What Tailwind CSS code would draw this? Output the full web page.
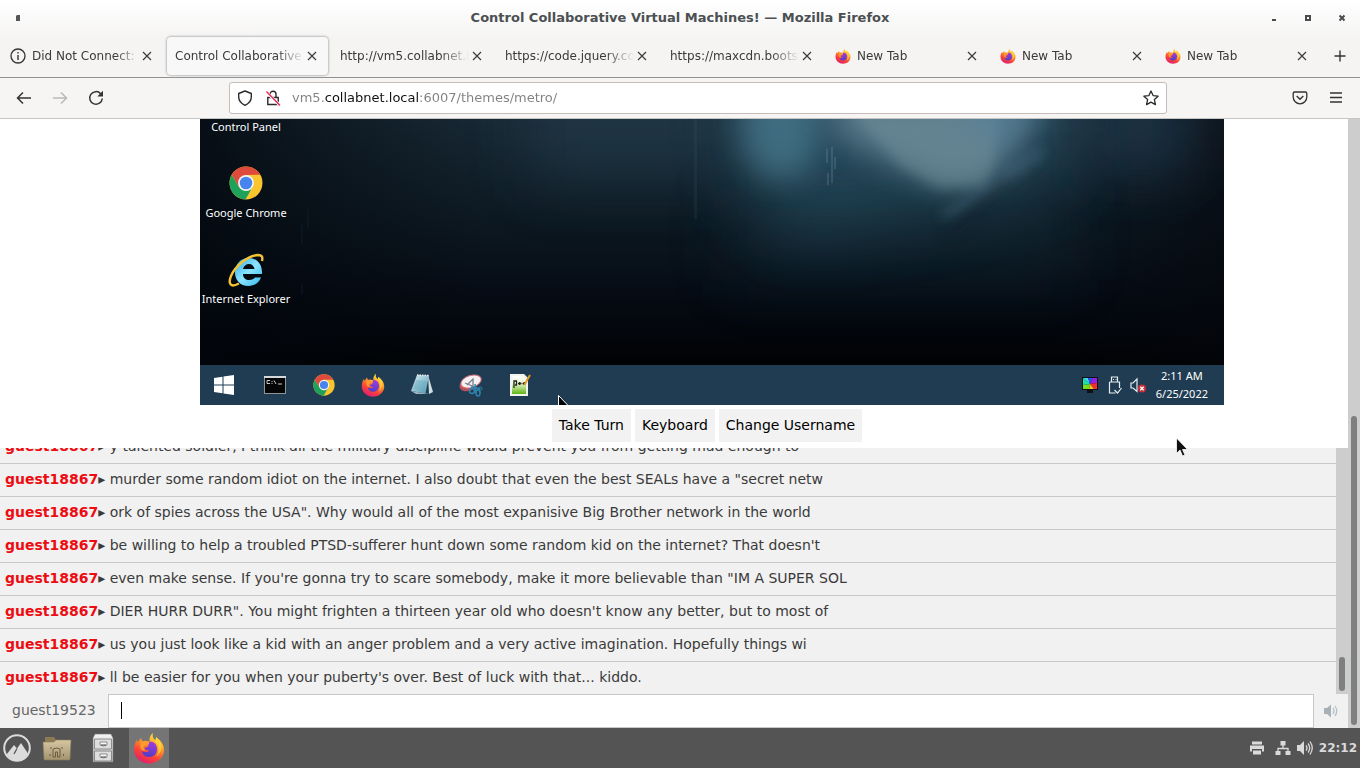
<!DOCTYPE html>
<html lang="en">
<head>
<meta charset="utf-8">
<title>Control Collaborative Virtual Machines!</title>
<script src="https://cdn.jsdelivr.net/npm/@tailwindcss/browser@4"></script>
</head>
<body class="flex h-screen flex-col overflow-hidden bg-white font-['DejaVu_Sans',sans-serif] text-[#3a3a3a]">

<!-- shared icon symbols -->
<svg class="absolute h-0 w-0" aria-hidden="true">
  <defs>
    <linearGradient id="ffBody" x1="0.8" y1="0" x2="0.3" y2="1"><stop offset="0" stop-color="#fff04a"/><stop offset=".35" stop-color="#ffa52a"/><stop offset=".7" stop-color="#fb4438"/><stop offset="1" stop-color="#e01b72"/></linearGradient>
    <linearGradient id="ffCore" x1="0.6" y1="0" x2="0.3" y2="1"><stop offset="0" stop-color="#a13ae0"/><stop offset="1" stop-color="#4b3fc4"/></linearGradient>
    <linearGradient id="ieBlue" x1="0" y1="0" x2="1" y2="1"><stop offset="0" stop-color="#2fa6e6"/><stop offset=".5" stop-color="#8be4ff"/><stop offset="1" stop-color="#35b7ea"/></linearGradient>
    <linearGradient id="folderFill" x1="0" y1="0" x2="0" y2="1"><stop offset="0" stop-color="#d6c7a2"/><stop offset="1" stop-color="#a3946f"/></linearGradient>
    <linearGradient id="cabinetFill" x1="0" y1="0" x2="0" y2="1"><stop offset="0" stop-color="#f4f4f4"/><stop offset="1" stop-color="#bdbdbd"/></linearGradient>
    <linearGradient id="padFill" x1="0" y1="0" x2="1" y2="1"><stop offset="0" stop-color="#dff3f8"/><stop offset="1" stop-color="#4c93ad"/></linearGradient>
    <linearGradient id="nppFill" x1="0" y1="0" x2="0" y2="1"><stop offset="0" stop-color="#ffffff"/><stop offset=".4" stop-color="#e9f6cf"/><stop offset="1" stop-color="#5fb712"/></linearGradient>
  </defs>
  <symbol id="firefox" viewBox="0 0 32 32">
    <path fill="url(#ffBody)" d="M20 1c-1 3 0 5 2 7 1-1 1-2 1-3 4 3 8 7 8 13 0 8-7 13.500-15 13.500S1 25.500 1 17.500c0-4 1-7 3-10l.5 3L8 6l1.500 4c3-1 5-.5 7-.5-.5-3.500 1-7 3.500-8.500z"/>
    <path fill="url(#ffCore)" d="M16 9.500c5-.5 8 3 8 7.500 0 5-3.500 8-8 8-4 0-7-3-7-6 2 1.500 5 1.500 7.500-.5-3 0-5-1.500-5-2.500 2-.5 4-1.500 4-3z"/>
    <path fill="#ff9a2e" d="M8 9.500c3-1 6-1 8.500.5 0 2-3 3-4.500 3.500-2 1-2 3 0 4.500-2 1-4 0-4.500-2-.5-2 0-4 .5-6.500z"/>
    <path fill="#ffd43b" opacity=".8" d="M22 9c4 4 5 11 1 16 6-4 7-12 3-17l-3-3c0 2 0 3-1 4z"/>
  </symbol>
  <symbol id="chrome" viewBox="0 0 32 32">
    <circle cx="16" cy="16" r="15.500" fill="#fbc52f"/>
    <path fill="#de4a3c" d="M2.600 8.200A15.500 15.500 0 0 1 29.400 8.200L16 8.500 9.500 20z"/>
    <path fill="#1ea15a" d="M2.600 8.200A15.500 15.500 0 0 0 15.500 31.500L22.200 19.500 16 23.500 9.300 19.800z"/>
    <circle cx="16" cy="16" r="7.500" fill="#f3f3f3"/><circle cx="16" cy="16" r="5.900" fill="#4884ee"/>
  </symbol>
  <symbol id="close" viewBox="0 0 16 16"><path d="M4 4l8 8M12 4l-8 8" fill="none" stroke="#3b3b3b" stroke-width="1.200"/></symbol>
</svg>

<header class="shrink-0 border-b border-[#919191] bg-linear-to-b from-white to-[#f5f4f3] to-50%">
  <div class="flex h-[35px] items-center px-2.5">
    <div class="flex flex-1"><svg class="ml-1.5 h-2 w-1" viewBox="0 0 4 8"><path d="M1 1h3v6H0V2z" fill="#555"/></svg></div>
    <h1 class="text-[13px] font-bold text-[#4b5052]">Control Collaborative Virtual Machines! — Mozilla Firefox</h1>
    <div class="flex flex-1 justify-end gap-[18px]">
      <button aria-label="Minimize" class="h-4 w-4"><svg viewBox="0 0 16 16"><path d="M6 9h4v2H6z" fill="#4b4b4b"/></svg></button>
      <button aria-label="Maximize" class="h-4 w-4"><svg viewBox="0 0 16 16"><path d="M6 6h4v4H6z" fill="none" stroke="#4b4b4b" stroke-width="2"/></svg></button>
      <button aria-label="Close" class="h-4 w-4"><svg viewBox="0 0 16 16"><path d="M5.500 5.500l5 5M10.500 5.500l-5 5" stroke="#4b4b4b" stroke-width="2"/></svg></button>
    </div>
  </div>
  <nav aria-label="Tabs" class="flex h-[42px] items-center text-[12px] [&_span]:flex-1 [&_span]:overflow-hidden [&_span]:whitespace-nowrap [&_span]:[mask-image:linear-gradient(to_right,black_78%,transparent)]">
    <div class="mx-0.5 flex h-[38px] min-w-0 flex-1 items-center px-2"><svg class="mr-1.5 h-4 w-4 shrink-0" viewBox="0 0 16 16"><circle cx="8" cy="8" r="7" fill="none" stroke="#333" stroke-width="1.300"/><path d="M7.300 4h1.400v1.500H7.300zM7.300 7h1.400v5H7.300z" fill="#333"/></svg><span>Did Not Connect: </span><button aria-label="Close tab" class="h-4 w-4 shrink-0"><svg viewBox="0 0 16 16"><use href="#close"/></svg></button></div>
    <div class="mx-0.5 flex h-[38px] min-w-0 flex-1 items-center rounded-sm bg-[#f9f8f8] px-2 shadow-[0_0_2px_1px_#bbb]"><span>Control Collaborative</span><button aria-label="Close tab" class="h-4 w-4 shrink-0"><svg viewBox="0 0 16 16"><use href="#close"/></svg></button></div>
    <div class="mx-0.5 flex h-[38px] min-w-0 flex-1 items-center px-2"><span>http://vm5.collabnet.l</span><button aria-label="Close tab" class="h-4 w-4 shrink-0"><svg viewBox="0 0 16 16"><use href="#close"/></svg></button></div>
    <div class="mx-0.5 flex h-[38px] min-w-0 flex-1 items-center px-2"><span>https://code.jquery.co</span><button aria-label="Close tab" class="h-4 w-4 shrink-0"><svg viewBox="0 0 16 16"><use href="#close"/></svg></button></div>
    <div class="mx-0.5 flex h-[38px] min-w-0 flex-1 items-center px-2"><span>https://maxcdn.bootst</span><button aria-label="Close tab" class="h-4 w-4 shrink-0"><svg viewBox="0 0 16 16"><use href="#close"/></svg></button></div>
    <div class="mx-0.5 flex h-[38px] min-w-0 flex-1 items-center px-2"><svg class="mr-1.5 h-4 w-4 shrink-0"><use href="#firefox"/></svg><span>New Tab</span><button aria-label="Close tab" class="h-4 w-4 shrink-0"><svg viewBox="0 0 16 16"><use href="#close"/></svg></button></div>
    <div class="mx-0.5 flex h-[38px] min-w-0 flex-1 items-center px-2"><svg class="mr-1.5 h-4 w-4 shrink-0"><use href="#firefox"/></svg><span>New Tab</span><button aria-label="Close tab" class="h-4 w-4 shrink-0"><svg viewBox="0 0 16 16"><use href="#close"/></svg></button></div>
    <div class="mx-0.5 flex h-[38px] min-w-0 flex-1 items-center px-2"><svg class="mr-1.5 h-4 w-4 shrink-0"><use href="#firefox"/></svg><span>New Tab</span><button aria-label="Close tab" class="h-4 w-4 shrink-0"><svg viewBox="0 0 16 16"><use href="#close"/></svg></button></div>
    <button aria-label="New tab" class="flex w-10 justify-center"><svg class="h-4 w-4" viewBox="0 0 16 16"><path d="M8 2.500v11M2.500 8h11" stroke="#333" stroke-width="1.400"/></svg></button>
  </nav>
</header>

<div class="flex h-[41px] shrink-0 items-center border-b border-[#c5c5c3] bg-[#f6f5f4]">
  <div class="flex flex-1 gap-5 pl-4">
    <button aria-label="Back" class="h-4 w-4"><svg viewBox="0 0 16 16"><path d="M7 2.500L1.500 8 7 13.500M1.500 8H15" fill="none" stroke="#333" stroke-width="1.500"/></svg></button>
    <button aria-label="Forward" class="h-4 w-4"><svg viewBox="0 0 16 16"><path d="M9 2.500L14.500 8 9 13.500M14.500 8H1" fill="none" stroke="#b9b9b9" stroke-width="1.500"/></svg></button>
    <button aria-label="Reload" class="h-4 w-4"><svg viewBox="0 0 16 16"><path d="M12.700 3.700A6.300 6.300 0 1 0 14.300 8.500" fill="none" stroke="#333" stroke-width="1.500"/><path d="M15 .8V6.500H9.300z" fill="#333"/></svg></button>
  </div>
  <div class="flex h-8 w-[938px] max-w-full items-center rounded-[3px] border border-[#c4bdb8] bg-white px-[7px]">
    <svg class="h-4 w-4 shrink-0" viewBox="0 0 16 16"><path d="M8 1L14.300 3.500V7c0 4-2.500 6.500-6.300 8.300C4.200 13.500 1.700 11 1.700 7V3.500z" fill="none" stroke="#2b2b2b" stroke-width="1.400" stroke-linejoin="round"/></svg>
    <svg class="ml-3 h-4 w-4 shrink-0" viewBox="0 0 16 16"><path d="M2.800 7.500h10.400v7H2.800zM5 7.500V4.300a3 3 0 0 1 6 0v3.200" fill="none" stroke="#2b2b2b" stroke-width="1.400"/><path d="M1 1.500l14 14" stroke="#fff" stroke-width="3"/><path d="M1.500 1.500l13.500 14" stroke="#e22850" stroke-width="1.400"/></svg>
    <input aria-label="Address" value="vm5.collabnet.local:6007/themes/metro/" class="ml-[11px] min-w-0 flex-1 bg-[linear-gradient(to_right,#808080_32px,#111_32px,#111_127px,#808080_127px)] bg-clip-text text-[13px] text-transparent outline-none">
    <button aria-label="Bookmark" class="h-4 w-4"><svg viewBox="0 0 16 16"><path d="M8 1l2.100 4.600 5 .6-3.700 3.400 1 5L8 12.100l-4.400 2.500 1-5L.9 6.200l5-.6z" fill="none" stroke="#2b2b2b" stroke-width="1.300" stroke-linejoin="round"/></svg></button>
  </div>
  <div class="flex w-[193px] justify-end gap-5 pr-4">
    <button aria-label="Pocket" class="h-4 w-4"><svg viewBox="0 0 16 16"><path d="M2.500 2h11q1.300 0 1.300 1.300V7a6.800 6.800 0 0 1-13.600 0V3.300Q1.200 2 2.500 2z" fill="none" stroke="#333" stroke-width="1.300"/><path d="M4.700 6l3.300 3.200L11.300 6" fill="none" stroke="#333" stroke-width="1.400"/></svg></button>
    <button aria-label="Menu" class="h-4 w-4"><svg viewBox="0 0 16 16"><path d="M2 3h12M2 7.500h12M2 12h12" stroke="#333" stroke-width="1.300"/></svg></button>
  </div>
</div>

<div class="flex min-h-0 flex-1">
  <main class="flex min-w-0 flex-1 flex-col">
    <div class="flex shrink-0 justify-center pl-[76px]">
      <section aria-label="Virtual machine display" class="relative flex h-[286px] w-[1024px] max-w-full flex-col overflow-hidden bg-[#04070c] font-['Noto_Sans',sans-serif] text-[11px] text-white">
        <svg class="absolute inset-0 h-full w-full" viewBox="0 0 1024 286" preserveAspectRatio="none">
          <defs>
            <linearGradient id="base" x1="0" y1="0" x2="0" y2="1"><stop offset="0" stop-color="#182935"/><stop offset=".35" stop-color="#0d1922"/><stop offset=".6" stop-color="#060c15"/><stop offset=".85" stop-color="#010204"/></linearGradient>
            <linearGradient id="side" x1="0" x2="1"><stop offset="0" stop-color="#02060c" stop-opacity=".75"/><stop offset=".28" stop-color="#02060c" stop-opacity="0"/><stop offset=".85" stop-color="#02060c" stop-opacity="0"/><stop offset="1" stop-color="#05060c" stop-opacity=".6"/></linearGradient>
            <filter id="b30" x="-100%" y="-100%" width="300%" height="300%"><feGaussianBlur stdDeviation="30 30"/></filter>
            <filter id="b12" x="-100%" y="-100%" width="300%" height="300%"><feGaussianBlur stdDeviation="15"/></filter>
            <filter id="b5" x="-100%" y="-100%" width="300%" height="300%"><feGaussianBlur stdDeviation="6"/></filter>
          </defs>
          <rect width="1024" height="286" fill="url(#base)"/>
          <rect width="1024" height="286" fill="url(#side)"/>
          <path d="M330-40H530V60H330z" fill="#274352" opacity=".5" filter="url(#b30)"/>
          <path d="M530-60H870V60L760 90 600 120 540 70z" fill="#2f5a70" opacity=".65" filter="url(#b30)"/>
          <path d="M530 70H870V160H530z" fill="#173543" opacity=".35" filter="url(#b30)"/>
          <ellipse cx="580" cy="8" rx="40" ry="52" fill="#4b7d90" opacity=".7" filter="url(#b12)"/>
          <path d="M625-20H850L795 62 745 70 700 48 640 20z" fill="#68899a" opacity=".75" filter="url(#b12)"/>
          <path d="M640-20H800L795 40 785 68H738L700 46z" fill="#77959e" opacity=".4" filter="url(#b5)"/>
          <path d="M750-20H840L800 30z" fill="#4f7fa0" opacity=".45" filter="url(#b12)"/>
          <path d="M838 28L846 36 750 100 738 98z" fill="#4a6b80" opacity=".5" filter="url(#b5)"/>
          <path d="M803 58L815 62 755 120 740 114z" fill="#0a1c28" opacity=".35" filter="url(#b5)"/>
          <path d="M890-30H990V50H890z" fill="#25435a" opacity=".6" filter="url(#b30)"/>
          <path d="M494 0h3v100h-3z" fill="#4a626c" opacity=".15"/>
          <path d="M627 30v14M632 28v36M635 38v12M628 54v12" stroke="#7393aa" stroke-width="1.500" opacity=".35"/>
          <path d="M102 105v20M108 90v18M102 165v10" stroke="#14283c" stroke-width="1" opacity=".6"/>
        </svg>
        <div class="relative flex w-[92px] flex-1 flex-col items-center text-center leading-[15px] whitespace-nowrap">
          <div>Control Panel</div>
          <svg class="mt-8 h-[34px] w-[34px]"><use href="#chrome"/></svg>
          <div class="mt-[5px]">Google Chrome</div>
          <svg class="mt-8 h-9 w-9" viewBox="0 0 36 36"><path fill-rule="evenodd" d="M34 22H15c0 4 3 6 6 6s5-1 6-2.500h6c-2 5.500-7 8.500-12.500 8.500C12 34 7 28 7 20.500S12 6 20.500 6 34.500 12 34 22zM15 17h11.500c-.5-3-2.500-5-5.500-5s-5.500 2-6 5z" fill="url(#ieBlue)"/><path d="M34 9c1-4 0-6-4-6C20 3.500 7 14 3 24c-2 5-2 9 2 9.500 2 0 4-1 6-2" fill="none" stroke="#f2c230" stroke-width="2.400"/></svg>
          <div class="mt-[3px]">Internet Explorer</div>
        </div>
        <div class="relative flex h-10 items-center bg-[#203c52]">
          <button aria-label="Start" class="mr-0.5 flex w-12 justify-center"><svg class="h-5 w-5" viewBox="0 0 20 20"><path fill="#fff" d="M0 3l8.500-1.300v7.800H0zM9.500 1.500L20 0v9.500H9.500zM0 10.500h8.500v7.800L0 17zM9.500 10.500H20V20L9.500 18.500z"/></svg></button>
          <button aria-label="Command Prompt" class="flex w-[49px] justify-center"><svg class="h-5 w-[22px]" viewBox="0 0 22 20"><path d="M0 1h22v18H0z" fill="#8f9496"/><path d="M0 1h22v2H0z" fill="#d5d8da"/><path d="M1 3h20v15H1z" fill="#050505"/><path d="M3 5.500h3M3 5.500v3h3M8 6v1M8 8v1M10 5.500l2 3.500M14 9h4" stroke="#ccc" fill="none"/></svg></button>
          <button aria-label="Google Chrome" class="flex w-[49px] justify-center"><svg class="h-[22px] w-[22px]"><use href="#chrome"/></svg></button>
          <button aria-label="Firefox" class="flex w-[49px] justify-center"><svg class="h-6 w-6"><use href="#firefox"/></svg></button>
          <button aria-label="Notepad" class="flex w-[49px] justify-center"><svg class="h-6 w-6" viewBox="0 0 24 24"><path d="M18 2l5 17-4 2z" fill="#cfdfe4"/><path d="M7 2l12 .5-3.500 18L1 18z" fill="url(#padFill)"/><path d="M1 18l14.500 2.500 4 .5L6 21z" fill="#9bb6c0"/><path d="M7 2l12 .5" stroke="#e9eef0" stroke-width="1.500" stroke-dasharray="1.500 1"/><path d="M6 7l11 1L13 18 3 16z" fill="#67aabf" opacity=".45"/></svg></button>
          <button aria-label="Snipping Tool" class="flex w-[49px] justify-center"><svg class="h-6 w-6" viewBox="0 0 24 24"><ellipse cx="10" cy="11" rx="10" ry="6.500" fill="#b9515c" transform="rotate(-25 10 11)"/><ellipse cx="12" cy="8.500" rx="10.500" ry="6" fill="#f6f0f3" stroke="#d0727c" transform="rotate(-18 12 8.500)"/><path d="M8 12l6-6v7M6 10l12 5" stroke="#777f8d" fill="none" stroke-width="1.300"/><path d="M12 14l9 2M16 11l1 9" stroke="#2f83ad" stroke-width="1.500"/><circle cx="13" cy="18" r="2.500" fill="none" stroke="#2f83ad" stroke-width="1.500"/><ellipse cx="19" cy="20" rx="2" ry="3" fill="none" stroke="#2f83ad" stroke-width="1.500"/><ellipse cx="21" cy="15.500" rx="2" ry="1.500" fill="none" stroke="#2f83ad"/></svg></button>
          <button aria-label="Notepad++" class="flex w-[49px] justify-center"><svg class="h-6 w-6" viewBox="0 0 24 24"><path d="M2 1h14l4 4v18H2z" fill="#f4f4ee"/><path d="M4 3h12v2h2v16H4z" fill="url(#nppFill)"/><path d="M6 15V8h2.500v4H7M10 10.500h3.500M11.700 9v3M14.500 10.500H18M16.200 9v3" stroke="#222" fill="none" stroke-width="1.300"/><path d="M22 2l-4 7-1.500 3" stroke="#e09b2c" stroke-width="2"/></svg></button>
          <div class="ml-auto flex items-center pr-4">
            <svg class="mr-2.5 h-4 w-4" viewBox="0 0 16 16"><path d="M0 0h16v13h-5v3H5v-3H0z" fill="#101018"/><path d="M1 1h5l2 6z" fill="#40d8f0"/><path d="M6 1h5L8 7z" fill="#2a50f0"/><path d="M11 1h4v5L8 7z" fill="#9a20e0"/><path d="M15 6v6H12L8 7z" fill="#f03030"/><path d="M12 12H7l1-5z" fill="#f8c020"/><path d="M7 12H1V8l7-1z" fill="#70e020"/><path d="M1 1v7l7-1z" fill="#20e0a0"/></svg>
            <svg class="mr-2 h-[18px] w-[14px]" viewBox="0 0 14 18"><path d="M3.500 6V1h6v5M1.500 6h10v6M1.500 6v11h6M5 3.500h1M7.500 3.500h1M6.500 14l3 3 4-5" fill="none" stroke="#e6edf0" stroke-width="1.200"/></svg>
            <svg class="mr-2.5 h-4 w-4" viewBox="0 0 16 16"><path d="M1 6v5h2l4 3.500V2L3 6z" fill="none" stroke="#e6edf0" stroke-width="1.200"/><circle cx="12" cy="11.500" r="4" fill="#c9303c"/><path d="M10.300 9.800l3.400 3.400M13.700 9.800l-3.400 3.400" stroke="#fff" stroke-width="1.300"/></svg>
            <div class="text-center leading-[18px]"><div>2:11 AM</div><div>6/25/2022</div></div>
          </div>
          <svg class="absolute left-[358px] top-[30px] h-[18px] w-3" viewBox="0 0 12 18"><path d="M.5.500v15l3.500-3 2 5 2-1-2-5h5z" fill="#000" stroke="#fff"/></svg>
        </div>
      </section>
    </div>
    <div class="flex shrink-0 justify-center gap-1 pt-1 pb-1.5 pl-[66px] text-[14px] text-black [&_button]:h-[33px] [&_button]:bg-[#f2f2f2] [&_button]:px-[7px]">
      <button>Take Turn</button><button>Keyboard</button><button>Change Username</button>
    </div>

    <div class="flex min-h-0 flex-1 bg-[#f1f1f1]">
      <ul class="flex min-w-0 flex-1 flex-col justify-end overflow-hidden text-[14px] whitespace-nowrap [&_b]:text-[#ec0c12] [&_li]:h-[33px] [&_li]:shrink-0 [&_li]:border-t [&_li]:border-[#c9c9c9] [&_li]:pl-[5px] [&_li]:leading-[31px]">
        <li><b>guest18867</b>▸ y talented soldier, I think all the military discipline would prevent you from getting mad enough to</li>
        <li><b>guest18867</b>▸ murder some random idiot on the internet. I also doubt that even the best SEALs have a "secret netw</li>
        <li><b>guest18867</b>▸ ork of spies across the USA". Why would all of the most expanisive Big Brother network in the world</li>
        <li><b>guest18867</b>▸ be willing to help a troubled PTSD-sufferer hunt down some random kid on the internet? That doesn't</li>
        <li><b>guest18867</b>▸ even make sense. If you're gonna try to scare somebody, make it more believable than "IM A SUPER SOL</li>
        <li><b>guest18867</b>▸ DIER HURR DURR". You might frighten a thirteen year old who doesn't know any better, but to most of</li>
        <li><b>guest18867</b>▸ us you just look like a kid with an anger problem and a very active imagination. Hopefully things wi</li>
        <li><b>guest18867</b>▸ ll be easier for you when your puberty's over. Best of luck with that... kiddo.</li>
      </ul>
      <div class="flex w-3 flex-col items-center justify-end bg-[#cdcdcd] pb-[3px]"><div class="h-[34px] w-1.5 rounded-full bg-[#7d807f]"></div></div>
    </div>

    <div class="flex h-[34px] shrink-0 items-stretch bg-[#f1f1f1] text-[14px]">
      <label for="chat" class="w-[108px] pl-3 leading-8 text-[#666]">guest19523</label>
      <div class="relative flex flex-1">
        <input id="chat" class="min-w-0 flex-1 border border-[#c8c8c8] bg-white px-3 outline-none">
        <span class="absolute left-[13px] top-2 h-[17px] w-px bg-black"></span>
      </div>
      <button aria-label="Sound" class="flex w-[34px] items-center justify-center"><svg class="h-4 w-4" viewBox="0 0 16 16"><path d="M1 5h3l4-3.500v13L4 11H1z" fill="#a9b0b5"/><path d="M10 5q2 3 0 6M12 3q3.500 5 0 10" fill="none" stroke="#b4c0c9" stroke-width="1.300"/></svg></button>
    </div>
  </main>
  <div class="flex w-3 flex-col items-center justify-end bg-[#cdcdcd] pb-[3px]"><div class="h-[51%] w-1.5 rounded-full bg-[#7d807f]"></div></div>
</div>

<footer class="flex h-10 shrink-0 items-center bg-[#545454]">
  <button aria-label="Menu" class="ml-[3px] h-7 w-7"><svg viewBox="0 0 28 28"><circle cx="14" cy="14" r="12.800" fill="none" stroke="#dcdcdc" stroke-width="2"/><path d="M3.500 20.500L11 11l3 3.500L18 9l7 10.500A12 12 0 0 1 5 22z" fill="#dcdcdc"/><path d="M11 20l3-5.500" stroke="#545454" stroke-width="1.300"/></svg></button>
  <button aria-label="Files" class="ml-[11px] h-7 w-[30px]"><svg viewBox="0 0 30 28"><path d="M3 3h9l2 3h13v6H3z" fill="#8d7a55"/><path d="M1 8h11l2-2h15l-1 19q0 1-1 1H3q-1 0-1-1z" fill="url(#folderFill)" stroke="#8a7c5c" stroke-width=".6"/><path d="M11 23v-8q4-2 7 0v8h-2.500v-5h-2v5z" fill="none" stroke="#6b5d40"/><path d="M8 14h2M19 14h2M8 22v-2M21.500 22v-2" stroke="#6b5d40"/></svg></button>
  <button aria-label="Archive" class="ml-5 h-[30px] w-[22px]"><svg viewBox="0 0 22 30"><path d="M3 1h16l2 4v24H1V5z" fill="url(#cabinetFill)" stroke="#777" stroke-width=".6"/><path d="M2.500 6h17v10h-17zM2.500 18h17v10h-17z" fill="#dedede" stroke="#777" stroke-width=".8"/><path d="M8 9h7v3q-3.500 2-7 0zM8 21h7v3q-3.500 2-7 0z" fill="#f8f8f8" stroke="#777" stroke-width=".8"/><path d="M9 12h5M9 24h5" stroke="#444" stroke-width="1.200"/></svg></button>
  <button aria-label="Firefox" class="ml-[15px] flex h-10 w-10 items-center justify-center bg-[#757575]"><svg class="h-8 w-8"><use href="#firefox"/></svg></button>
  <div class="ml-auto flex items-center pr-[3px]">
    <svg class="mr-2.5 h-4 w-4" viewBox="0 0 16 16"><path d="M3 1.500h10v3H3zM1 5.500h14v6h-2V9H3v2.500H1zM4 10.500h8v4H4z" fill="#dadada"/></svg>
    <svg class="mr-1.5 h-4 w-4" viewBox="0 0 16 16"><path d="M5.500 1h5v4.500h-5zM.5 11h5v4h-5zM10.500 11h5v4h-5z" fill="#dadada"/><path d="M8 5v3M3 11V8.500h10V11" fill="none" stroke="#dadada" stroke-width="1.300"/></svg>
    <svg class="mr-1.5 h-4 w-4" viewBox="0 0 16 16"><path d="M0 5h3l4-4v14l-4-4H0z" fill="#dadada"/><path d="M9 5.500q2 2.500 0 5M11 3.500q3.500 4.500 0 9M13 1.500q4.500 6.500 0 13" fill="none" stroke="#dadada" stroke-width="1.300"/></svg>
    <time class="text-[12px] font-bold text-[#dadada]">22:12</time>
  </div>
</footer>

<!-- pointer -->
<svg class="absolute left-[1176px] top-[437px] h-5 w-3" viewBox="0 0 12 20"><path d="M.5 1v15.500l3.500-3.500 2.500 6 2.500-1-2.500-5.500h5z" fill="#111" stroke="#fff" stroke-width=".8"/></svg>
</body>
</html>
